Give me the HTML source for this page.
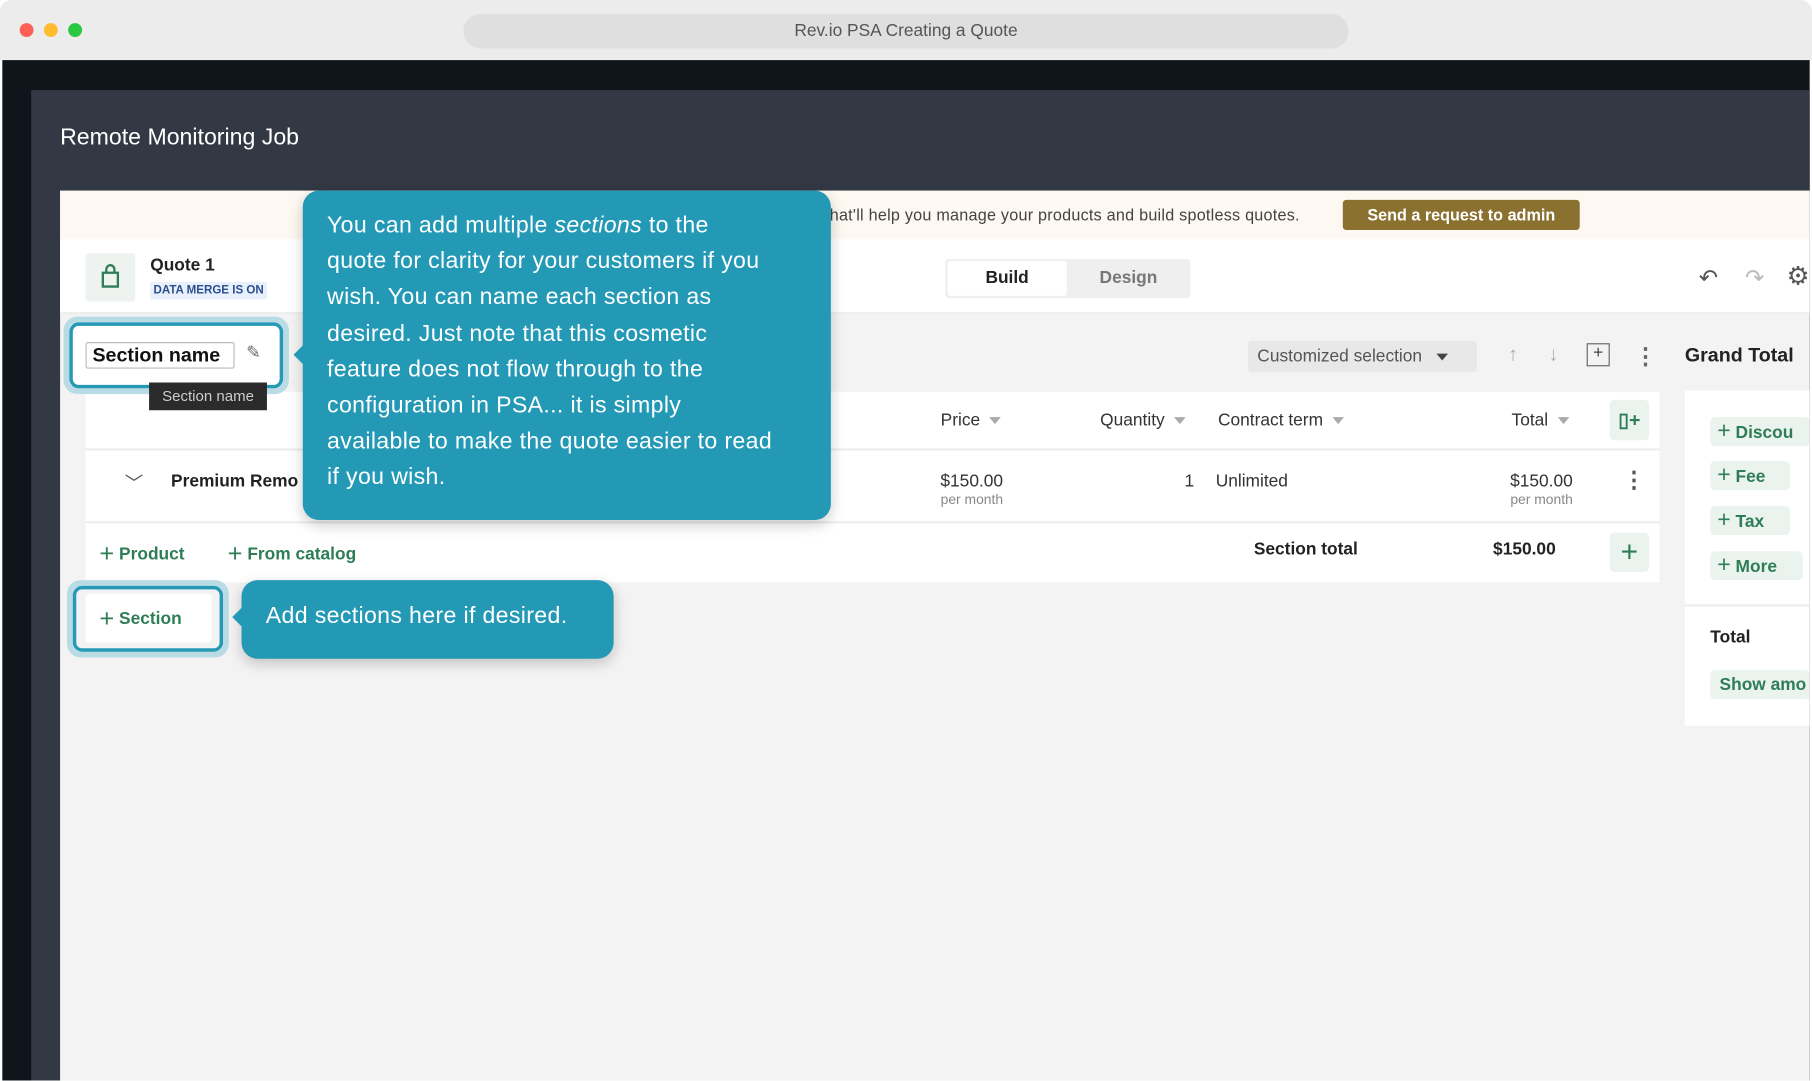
<!DOCTYPE html>
<html><head><meta charset="utf-8"><style>
*{box-sizing:border-box;margin:0;padding:0}
html,body{width:1812px;height:1080px;overflow:hidden;background:#fff;font-family:"Liberation Sans",sans-serif}
#s{position:absolute;left:0;top:0;width:1568px;height:935px;transform:scale(1.15561);transform-origin:0 0}
.a{position:absolute}
.g{color:#2e7d57;font-weight:bold;font-size:15px}
.gb{background:#eaf3ee;border-radius:4px}
.h{font-size:15px;color:#333}
.tri{display:inline-block;width:0;height:0;border-left:5px solid transparent;border-right:5px solid transparent;border-top:6px solid #aaa;margin-left:8px;vertical-align:middle}
</style></head><body><div id="s">
<div class="a" style="left:0;top:0;width:1568px;height:52px;background:#ececec;border-radius:10px 10px 0 0"></div>
<div class="a" style="left:17px;top:20px;width:12px;height:12px;border-radius:50%;background:#fe5f57"></div>
<div class="a" style="left:38px;top:20px;width:12px;height:12px;border-radius:50%;background:#febc2e"></div>
<div class="a" style="left:59px;top:20px;width:12px;height:12px;border-radius:50%;background:#28c840"></div>
<div class="a" style="left:401px;top:12px;width:766px;height:30px;background:#dfdfdf;border-radius:15px;text-align:center;line-height:30px;font-size:15px;color:#555">Rev.io PSA Creating a Quote</div>
<div class="a" style="left:2px;top:52px;width:1564px;height:883px;background:#0f151b"></div>
<div class="a" style="left:27px;top:78px;width:1539px;height:857px;background:#323944"></div>
<div class="a" style="left:52px;top:108px;color:#fff;font-size:20px">Remote Monitoring Job</div>
<div class="a" style="left:52px;top:165px;width:1514px;height:770px;background:#f3f3f3"></div>
<div class="a" style="left:52px;top:165px;width:1514px;height:42px;background:#fdf8f1"></div>
<div class="a" style="left:718px;top:178px;font-size:14px;color:#444;letter-spacing:0.2px">hat'll help you manage your products and build spotless quotes.</div>
<div class="a" style="left:1162px;top:173px;width:205px;height:26px;background:#8b7130;border-radius:3px;color:#fff;font-weight:bold;font-size:14px;text-align:center;line-height:26px">Send a request to admin</div>
<div class="a" style="left:52px;top:207px;width:1514px;height:65px;background:#fff;border-bottom:2px solid #eee"></div>
<div class="a" style="left:74px;top:219px;width:43px;height:42px;background:#eef3f0;border-radius:3px"><svg width="43" height="42"><path d="M15 17h13v12H15z M18 17v-3a3.5 3.5 0 0 1 7 0v3" fill="none" stroke="#2e7d57" stroke-width="2"/></svg></div>
<div class="a" style="left:130px;top:221px;font-weight:bold;font-size:15px;color:#222">Quote 1</div>
<div class="a" style="left:130px;top:244px;width:101px;height:15px;background:#e8f0fb;color:#2a4f8f;font-size:10px;font-weight:bold;text-align:center;line-height:15px">DATA MERGE IS ON</div>
<div class="a" style="left:818px;top:224px;width:212px;height:34px;background:#efefef;border-radius:3px"></div>
<div class="a" style="left:820px;top:226px;width:103px;height:30px;background:#fff;border-radius:2px;text-align:center;line-height:30px;font-weight:bold;font-size:15px;color:#222">Build</div>
<div class="a" style="left:925px;top:226px;width:103px;height:30px;text-align:center;line-height:30px;font-weight:bold;font-size:15px;color:#777">Design</div>
<div class="a" style="left:1470px;top:228px;font-size:20px;color:#555">↶</div>
<div class="a" style="left:1510px;top:228px;font-size:20px;color:#bbb">↷</div>
<div class="a" style="left:1546px;top:226px;font-size:22px;color:#555">⚙</div>
<div class="a" style="left:1080px;top:295px;width:198px;height:27px;background:#e8e8e8;border-radius:3px;font-size:15px;color:#555;line-height:27px;padding-left:8px">Customized selection <span class="tri" style="border-top-color:#444"></span></div>
<div class="a" style="left:1305px;top:297px;font-size:17px;color:#aaa">↑</div>
<div class="a" style="left:1340px;top:297px;font-size:17px;color:#aaa">↓</div>
<div class="a" style="left:1373px;top:297px;width:20px;height:20px;border:1.5px solid #666;font-size:15px;line-height:16px;text-align:center;color:#444">+</div>
<div class="a" style="left:1414px;top:296px;font-size:20px;color:#666;font-weight:bold">⋮</div>
<div class="a" style="left:1458px;top:298px;font-weight:bold;font-size:17px;color:#222">Grand Total</div>
<div class="a" style="left:74px;top:339px;width:1362px;height:165px;background:#fff"></div>
<div class="a" style="left:74px;top:388px;width:1362px;height:2px;background:#eee"></div>
<div class="a" style="left:74px;top:451px;width:1362px;height:2px;background:#eee"></div>
<div class="a h" style="left:814px;top:355px">Price<span class="tri"></span></div>
<div class="a h" style="left:952px;top:355px">Quantity<span class="tri"></span></div>
<div class="a h" style="left:1054px;top:355px">Contract term<span class="tri"></span></div>
<div class="a h" style="left:1308px;top:355px">Total<span class="tri"></span></div>
<div class="a gb" style="left:1393px;top:346px;width:34px;height:35px;color:#2e7d57;font-weight:bold;font-size:17px;text-align:center;line-height:35px">▯+</div>
<div class="a" style="left:108px;top:405px;font-size:16px;color:#555">﹀</div>
<div class="a" style="left:148px;top:408px;font-weight:bold;font-size:15px;color:#222">Premium Remo</div>
<div class="a" style="left:768px;top:408px;width:100px;text-align:right;font-size:15px;color:#333">$150.00<div style="font-size:12px;color:#888">per month</div></div>
<div class="a h" style="left:1025px;top:408px">1</div>
<div class="a h" style="left:1052px;top:408px">Unlimited</div>
<div class="a" style="left:1261px;top:408px;width:100px;text-align:right;font-size:15px;color:#333">$150.00<div style="font-size:12px;color:#888">per month</div></div>
<div class="a" style="left:1404px;top:403px;font-size:20px;color:#555;font-weight:bold">⋮</div>
<div class="a g" style="left:86px;top:466px"><span style="font-size:22px;font-weight:normal;vertical-align:-2px">+</span> Product</div>
<div class="a g" style="left:197px;top:466px"><span style="font-size:22px;font-weight:normal;vertical-align:-2px">+</span> From catalog</div>
<div class="a" style="left:1085px;top:467px;font-weight:bold;font-size:15px;color:#222">Section total</div>
<div class="a" style="left:1292px;top:467px;font-weight:bold;font-size:15px;color:#222">$150.00</div>
<div class="a gb" style="left:1393px;top:461px;width:34px;height:34px;color:#2e7d57;font-size:26px;text-align:center;line-height:32px">+</div>
<div class="a" style="left:1458px;top:338px;width:108px;height:290px;background:#fff"></div>
<div class="a" style="left:1458px;top:523px;width:108px;height:2px;background:#eee"></div>
<div class="a gb g" style="left:1480px;top:361px;width:86px;height:25px;line-height:25px;padding-left:6px;white-space:nowrap;overflow:hidden"><span style="font-size:20px;font-weight:normal">+</span> Discou</div>
<div class="a gb g" style="left:1480px;top:399px;width:69px;height:25px;line-height:25px;padding-left:6px"><span style="font-size:20px;font-weight:normal">+</span> Fee</div>
<div class="a gb g" style="left:1480px;top:438px;width:69px;height:25px;line-height:25px;padding-left:6px"><span style="font-size:20px;font-weight:normal">+</span> Tax</div>
<div class="a gb g" style="left:1480px;top:477px;width:80px;height:25px;line-height:25px;padding-left:6px"><span style="font-size:20px;font-weight:normal">+</span> More</div>
<div class="a" style="left:1480px;top:543px;font-weight:bold;font-size:15px;color:#222">Total</div>
<div class="a gb g" style="left:1480px;top:580px;width:86px;height:25px;line-height:25px;padding-left:8px;white-space:nowrap;overflow:hidden">Show amo</div>
<!-- section name highlight -->
<div class="a" style="left:55px;top:274px;width:195px;height:67px;border:5px solid #b9dce4;border-radius:12px"></div>
<div class="a" style="left:60px;top:279px;width:185px;height:57px;border:3px solid #2699b6;border-radius:8px;background:#fff"></div>
<div class="a" style="left:74px;top:296px;width:129px;height:23px;border:1px solid #bbb;border-radius:2px;font-size:17px;font-weight:bold;color:#111;line-height:21px;padding-left:5px">Section name</div>
<div class="a" style="left:213px;top:296px;font-size:15px;color:#666">✎</div>
<div class="a" style="left:129px;top:331px;width:102px;height:24px;background:#2b2b2b;color:#ccc;font-size:13px;text-align:center;line-height:24px">Section name</div>
<!-- big callout -->
<div class="a" style="left:262px;top:165px;width:457px;height:285px;background:#2399b6;border-radius:14px;box-shadow:0 4px 12px rgba(0,0,0,.2)"></div>
<div class="a" style="left:254px;top:298px;width:0;height:0;border-top:9px solid transparent;border-bottom:9px solid transparent;border-right:9px solid #2399b6"></div>
<div class="a" style="left:283px;top:180px;width:440px;color:#fff;font-size:20px;line-height:31.2px;white-space:nowrap;letter-spacing:0.3px">You can add multiple <i>sections</i> to the<br>quote for clarity for your customers if you<br>wish. You can name each section as<br>desired. Just note that this cosmetic<br>feature does not flow through to the<br>configuration in PSA... it is simply<br>available to make the quote easier to read<br>if you wish.</div>
<!-- section button highlight -->
<div class="a" style="left:58px;top:502px;width:140px;height:67px;border:5px solid #b9dce4;border-radius:12px"></div>
<div class="a" style="left:63px;top:507px;width:130px;height:57px;border:3px solid #2699b6;border-radius:8px;background:#f3f3f3"></div>
<div class="a g" style="left:74px;top:514px;width:109px;height:42px;background:#fff;border-radius:3px;line-height:42px;padding-left:12px"><span style="font-size:22px;font-weight:normal;vertical-align:-2px">+</span> Section</div>
<div class="a" style="left:209px;top:502px;width:322px;height:68px;background:#2399b6;border-radius:14px;box-shadow:0 4px 12px rgba(0,0,0,.2);color:#fff;font-size:20px;line-height:62px;padding-left:21px;letter-spacing:0.3px">Add sections here if desired.</div>
<div class="a" style="left:201px;top:525px;width:0;height:0;border-top:9px solid transparent;border-bottom:9px solid transparent;border-right:9px solid #2399b6"></div>
</div></body></html>
